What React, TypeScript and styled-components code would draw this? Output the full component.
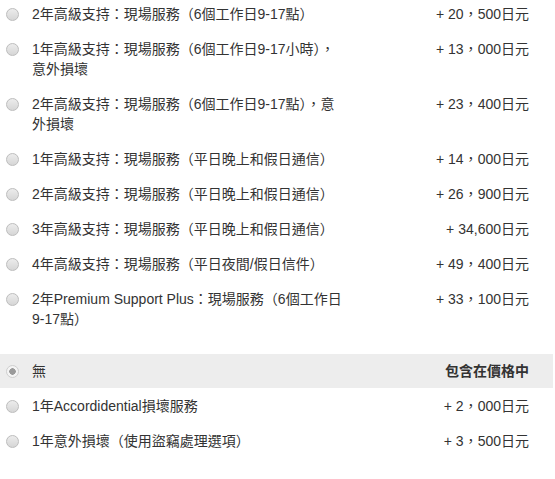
import React from "react";
import styled, { createGlobalStyle } from "styled-components";

const Global = createGlobalStyle`
  html, body { margin: 0; padding: 0; background: #fff; }
  body {
    font-family: "Liberation Sans", Arial, "Noto Sans CJK TC", sans-serif;
    font-size: 14px;
    color: #333;
  }
`;

const Page = styled.div`
  width: 553px;
  margin-top: -4px;
  display: flex;
  flex-direction: column;
  gap: 18px;
`;

const Group = styled.div`
  display: flex;
  flex-direction: column;
`;

const Row = styled.label<{ $selected?: boolean }>`
  display: grid;
  grid-template-columns: 32px 313px 1fr;
  align-items: start;
  padding: ${(p) => (p.$selected ? "7px 24px 7px 0" : "8px 24px 7px 0")};
  line-height: 20px;
  background: ${(p) => (p.$selected ? "#ededed" : "transparent")};
  cursor: pointer;
`;

const RadioCell = styled.span`
  display: flex;
  justify-content: center;
  align-items: center;
  height: 20px;
  padding-right: 7px;
`;

const Radio = styled.span<{ $checked?: boolean }>`
  box-sizing: border-box;
  width: 13px;
  height: 13px;
  border-radius: 50%;
  border: 1px solid ${(p) => (p.$checked ? "#cfcfcf" : "#bdbdbd")};
  background: ${(p) =>
    p.$checked
      ? "radial-gradient(circle, #9a9a9a 0 3px, #f4f4f4 3.5px)"
      : "linear-gradient(#ececec, #d6d6d6)"};
`;

const Label = styled.span`
  color: #333;
`;

const Price = styled.span<{ $bold?: boolean }>`
  text-align: right;
  white-space: nowrap;
  font-weight: ${(p) => (p.$bold ? 700 : 400)};
  color: #333;
`;

type Item = { label: string; price: string; selected?: boolean };

const first: Item[] = [
  { label: "2年高級支持：現場服務（6個工作日9-17點）", price: "+ 20，500日元" },
  { label: "1年高級支持：現場服務（6個工作日9-17小時），意外損壞", price: "+ 13，000日元" },
  { label: "2年高級支持：現場服務（6個工作日9-17點），意外損壞", price: "+ 23，400日元" },
  { label: "1年高級支持：現場服務（平日晚上和假日通信）", price: "+ 14，000日元" },
  { label: "2年高級支持：現場服務（平日晚上和假日通信）", price: "+ 26，900日元" },
  { label: "3年高級支持：現場服務（平日晚上和假日通信）", price: "+ 34,600日元" },
  { label: "4年高級支持：現場服務（平日夜間/假日信件）", price: "+ 49，400日元" },
  { label: "2年Premium Support Plus：現場服務（6個工作日9-17點）", price: "+ 33，100日元" },
];

const second: Item[] = [
  { label: "無", price: "包含在價格中", selected: true },
  { label: "1年Accordidential損壞服務", price: "+ 2，000日元" },
  { label: "1年意外損壞（使用盜竊處理選項）", price: "+ 3，500日元" },
];

function Option({ item }: { item: Item }) {
  return (
    <Row $selected={item.selected}>
      <RadioCell>
        <Radio $checked={item.selected} />
      </RadioCell>
      <Label>{item.label}</Label>
      <Price $bold={item.selected}>{item.price}</Price>
    </Row>
  );
}

export default function App() {
  return (
    <>
      <Global />
      <Page>
        <Group>
          {first.map((it, i) => (
            <Option key={i} item={it} />
          ))}
        </Group>
        <Group>
          {second.map((it, i) => (
            <Option key={i} item={it} />
          ))}
        </Group>
      </Page>
    </>
  );
}
